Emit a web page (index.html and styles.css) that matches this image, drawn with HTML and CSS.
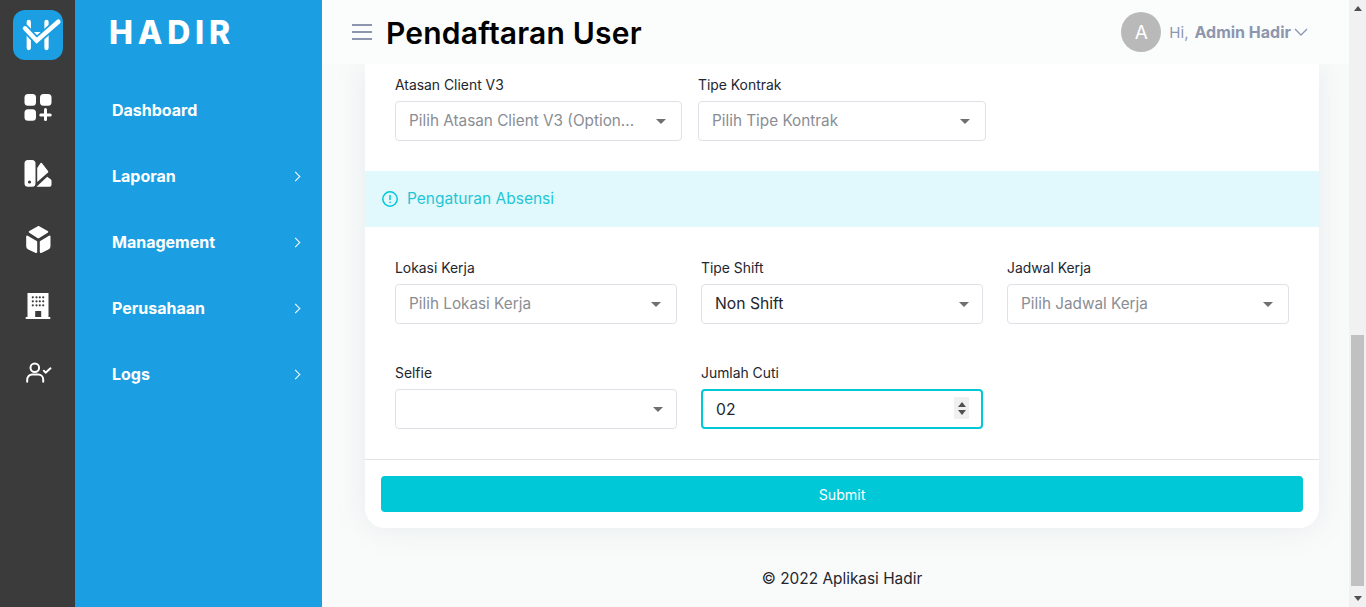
FILE: index.html
```html
<!DOCTYPE html>
<html lang="en">

<head>
    <meta charset="UTF-8">
    <title>Pendaftaran User</title>
    <link rel="stylesheet" href="styles.css">
</head>

<body>
    <div class="app">
        <nav class="rail">
            <div class="logo">
                <svg width="50" height="50" viewBox="0 0 50 50" fill="none" stroke-linecap="round">
                    <path d="M15.800 12v26M33.500 12v26" stroke="#fff" stroke-width="4.300"/>
                    <path d="M20 22h10l-5 5z" fill="#fff"/>
                    <path d="M12 18.300L23.700 30.700 45.300 11.700" stroke="#1b9fe2" stroke-width="8"/>
                    <path d="M12 18.300L23.700 30.700 45.300 11.700" stroke="#fff" stroke-width="4.500"/>
                </svg>
            </div>
            <div class="rail-icon">
                <svg width="28" height="28" viewBox="0 0 28 28" fill="#fff">
                    <rect x="0.500" y="0" width="11.500" height="11.700" rx="3.500"/>
                    <rect x="16" y="0" width="11.500" height="11.700" rx="3.500"/>
                    <rect x="0.500" y="15.300" width="11.500" height="11.500" rx="3.500"/>
                    <path d="M20 15.500a1.500 1.500 0 0 1 3 0v4h3.200a1.500 1.500 0 0 1 0 3H23v3a1.500 1.500 0 0 1-3 0v-3h-3.200a1.500 1.500 0 0 1 0-3H20z"/>
                </svg>
            </div>
            <div class="rail-icon">
                <svg width="28" height="28" viewBox="0 0 28 28" fill="#fff">
                    <path d="M4 0h4a3.500 3.500 0 0 1 3.500 3.500v19.700A3.500 3.500 0 0 1 8 26.700H4a3.500 3.500 0 0 1-3.500-3.500V3.500A3.500 3.500 0 0 1 4 0z"/>
                    <circle cx="5.500" cy="22" r="1.600" fill="#3b3b3b"/>
                    <path d="M13.200 8l3-4.500a1.200 1.200 0 0 1 2 0l5.800 7.500a1.200 1.200 0 0 1 0 1.600L13.200 22z"/>
                    <path d="M12.500 26.700l10.700-10 3.500 2.600a2 2 0 0 1 .8 1.600v3.800a2 2 0 0 1-2 2z"/>
                </svg>
            </div>
            <div class="rail-icon">
                <svg width="28" height="28" viewBox="0 0 28 28" fill="#fff" stroke="#fff" stroke-width="2" stroke-linejoin="round">
                    <path d="M14.300 1l8.900 4.800-8.900 5.500-8.500-5.500z"/>
                    <path d="M3.200 10.500l9 5.300V26l-7.500-3.500a2.500 2.500 0 0 1-1.500-2.300z"/>
                    <path d="M25.500 10.500l-8.700 5.300V26l7.200-3.500a2.500 2.500 0 0 0 1.500-2.300z"/>
                </svg>
            </div>
            <div class="rail-icon">
                <svg width="28" height="28" viewBox="0 0 28 28" fill="#fff">
                    <path d="M3.500 1h21v24h-21z"/>
                    <rect x="1.500" y="25" width="25" height="2" rx="1"/>
                    <g fill="#3b3b3b">
                        <circle cx="8.800" cy="5.300" r="1.100"/>
                        <circle cx="12.500" cy="5.300" r="1.100"/>
                        <circle cx="15.800" cy="5.300" r="1.100"/>
                        <circle cx="19.200" cy="5.300" r="1.100"/>
                        <circle cx="8.800" cy="9.300" r="1.100"/>
                        <circle cx="12.500" cy="9.300" r="1.100"/>
                        <circle cx="15.800" cy="9.300" r="1.100"/>
                        <circle cx="19.200" cy="9.300" r="1.100"/>
                        <circle cx="8.800" cy="13.300" r="1.100"/>
                        <circle cx="12.500" cy="13.300" r="1.100"/>
                        <circle cx="15.800" cy="13.300" r="1.100"/>
                        <circle cx="19.200" cy="13.300" r="1.100"/>
                        <rect x="11.200" y="19" width="6" height="6"/>
                    </g>
                </svg>
            </div>
            <div class="rail-icon">
                <svg width="28" height="28" viewBox="0 0 28 28" fill="none" stroke="#fff" stroke-width="2" stroke-linecap="round" stroke-linejoin="round">
                    <circle cx="10.800" cy="9.700" r="4.300"/>
                    <path d="M3.200 23.700v-2.200a5 5 0 0 1 5-5h6a5 5 0 0 1 5 5v2.200"/>
                    <path d="M19.800 12.700l1.800 2 4.900-4.400"/>
                </svg>
            </div>
        </nav>

        <aside class="sidebar">
            <div class="brand">HADIR</div>
            <ul class="menu">
                <li>Dashboard</li>
                <li>Laporan <span class="chevron"></span></li>
                <li>Management <span class="chevron"></span></li>
                <li>Perusahaan <span class="chevron"></span></li>
                <li>Logs <span class="chevron"></span></li>
            </ul>
        </aside>

        <div class="main">
            <header class="topbar">
                <div class="burger"><span></span><span></span><span></span></div>
                <h1>Pendaftaran User</h1>
                <div class="user">
                    <div class="avatar">A</div>
                    <span class="hi">Hi,</span>
                    <strong>Admin Hadir</strong>
                    <svg width="14" height="8" viewBox="0 0 14 8" fill="none" stroke="#8d96ad" stroke-width="1.300"><path d="M1 1l6 6 6-6"/></svg>
                </div>
            </header>

            <div class="content">
                <div class="card">
                    <div class="row row-two">
                        <div class="field">
                            <label>Atasan Client V3</label>
                            <div class="select placeholder">Pilih Atasan Client V3 (Option...</div>
                        </div>
                        <div class="field">
                            <label>Tipe Kontrak</label>
                            <div class="select placeholder">Pilih Tipe Kontrak</div>
                        </div>
                    </div>

                    <div class="band">
                        <svg width="18" height="18" viewBox="0 0 18 18" fill="none" stroke="#00c8d7" stroke-width="1.500" stroke-linecap="round">
                            <circle cx="9" cy="9" r="7.200"/>
                            <path d="M9 5.500v4M9 12.300v.2"/>
                        </svg>
                        Pengaturan Absensi
                    </div>

                    <div class="row row-three first">
                        <div class="field">
                            <label>Lokasi Kerja</label>
                            <div class="select placeholder">Pilih Lokasi Kerja</div>
                        </div>
                        <div class="field">
                            <label>Tipe Shift</label>
                            <div class="select native">Non Shift</div>
                        </div>
                        <div class="field">
                            <label>Jadwal Kerja</label>
                            <div class="select placeholder">Pilih Jadwal Kerja</div>
                        </div>
                    </div>

                    <div class="row row-three second">
                        <div class="field">
                            <label>Selfie</label>
                            <div class="select native"></div>
                        </div>
                        <div class="field">
                            <label>Jumlah Cuti</label>
                            <div class="number-wrap">
                                <input class="number" type="number" value="02">
                                <span class="spin"><i class="spin-up"></i><i class="spin-down"></i></span>
                            </div>
                        </div>
                    </div>

                    <div class="card-footer">
                        <button class="submit" type="button">Submit</button>
                    </div>
                </div>
                <footer class="copyright">© 2022 Aplikasi Hadir</footer>
            </div>
        </div>

        <div class="scrollbar">
            <span class="arrow up"></span>
            <div class="track"><div class="thumb"></div></div>
            <span class="arrow down"></span>
        </div>
    </div>
</body>

</html>
```

FILE: styles.css
```css
* {
    margin: 0;
    padding: 0;
    box-sizing: border-box;
    font-family: "Inter", "Noto Sans", sans-serif;
}

html,
body {
    height: 100%;
    overflow: hidden;
    background-color: #f9fbfa;
}

.app {
    display: flex;
    height: 607px;
}

.rail {
    display: flex;
    flex-direction: column;
    align-items: center;
    width: 75px;
    flex-shrink: 0;
    padding-top: 10px;
    background-color: #3b3b3b;
}

.logo {
    display: flex;
    justify-content: center;
    align-items: center;
    width: 50px;
    height: 50px;
    margin-bottom: 15px;
    border-radius: 12px;
    background-color: #1b9fe2;
}

.rail-icon {
    display: flex;
    justify-content: center;
    align-items: center;
    height: 66px;
    width: 100%;
}

.sidebar {
    width: 247px;
    flex-shrink: 0;
    background-color: #1b9fe2;
    color: #fff;
}

.brand {
    height: 66px;
    padding: 13px 0 0 34px;
    font-size: 32px;
    line-height: 40px;
    font-weight: 800;
    letter-spacing: 4.800px;
}

.menu {
    list-style: none;
    margin-top: 11px;
}

.menu li {
    display: flex;
    justify-content: space-between;
    align-items: center;
    height: 66px;
    padding: 0 21px 0 37px;
    font-size: 16px;
    font-weight: 700;
}

.chevron {
    width: 7px;
    height: 7px;
    margin-right: 2px;
    border-top: 1.500px solid #fff;
    border-right: 1.500px solid #fff;
    transform: rotate(45deg);
}

.main {
    display: flex;
    flex-direction: column;
    flex: 1;
    min-width: 0;
}

.topbar {
    position: relative;
    z-index: 1;
    display: flex;
    align-items: center;
    height: 64px;
    flex-shrink: 0;
    padding: 0 41px 0 30px;
    background-color: #fbfcfc;
}

.burger {
    display: flex;
    flex-direction: column;
    gap: 5px;
    width: 20px;
    margin-right: 14px;
}

.burger span {
    height: 2px;
    background-color: #8d96ad;
}

.topbar h1 {
    padding-top: 2px;
    font-size: 30px;
    font-weight: 600;
    letter-spacing: 0.200px;
    color: #000;
}

.user {
    display: flex;
    align-items: center;
    margin-left: auto;
    font-size: 15px;
    color: #8d96ad;
}

.avatar {
    display: flex;
    justify-content: center;
    align-items: center;
    width: 40px;
    height: 40px;
    margin-right: 8px;
    border-radius: 50%;
    background-color: #b9b9b9;
    color: #fff;
    font-size: 19px;
}

.user strong {
    margin: 0 3px 0 6px;
    font-size: 16px;
    font-weight: 700;
}

.content {
    flex: 1;
    min-height: 0;
    padding: 0 30px 0 43px;
}

.card {
    height: 464px;
    border-radius: 0 0 20px 20px;
    background-color: #fff;
    box-shadow: 0 0 30px rgba(130, 140, 165, 0.15);
}

.row {
    display: grid;
}

.row-two {
    grid-template-columns: 287px 288px;
    column-gap: 16px;
    height: 107px;
    padding: 13px 30px 0;
}

.row-three {
    grid-template-columns: repeat(3, 282px);
    column-gap: 24px;
    padding: 0 30px;
}

.row-three.first {
    padding-top: 33px;
}

.row-three.second {
    padding-top: 41px;
}

.field label {
    display: block;
    height: 16px;
    margin-bottom: 8px;
    font-size: 13.900px;
    line-height: 16px;
    color: #23262f;
}

.select {
    position: relative;
    height: 40px;
    padding-left: 13px;
    border: 1px solid #dfe1e7;
    border-radius: 4px;
    font-size: 15.700px;
    line-height: 38px;
    color: #23262f;
}

.select.placeholder {
    font-size: 15.300px;
    color: #8a8d93;
}

.select::after {
    content: "";
    position: absolute;
    right: 15px;
    top: 17px;
    border-left: 5px solid transparent;
    border-right: 5px solid transparent;
    border-top: 5px solid #6f6f6f;
}

.select.native::after {
    right: 13px;
}

.band {
    display: flex;
    align-items: center;
    gap: 8px;
    height: 56px;
    padding-left: 16px;
    padding-bottom: 1px;
    background-color: #e1f9fc;
    color: #1fc6d6;
    font-size: 15.500px;
}

.number-wrap {
    position: relative;
}

.number {
    display: block;
    width: 100%;
    height: 40px;
    padding: 0 13px;
    border: 2px solid #00c8d7;
    border-radius: 4px;
    outline: none;
    font-size: 15.700px;
    color: #23262f;
}

.number::-webkit-inner-spin-button {
    -webkit-appearance: none;
    margin: 0;
}

.spin {
    position: absolute;
    right: 14px;
    top: 8px;
    display: flex;
    flex-direction: column;
    justify-content: center;
    align-items: center;
    gap: 3px;
    width: 15px;
    height: 22px;
    background-color: #f0f0f0;
}

.spin i {
    border-left: 4px solid transparent;
    border-right: 4px solid transparent;
}

.spin-up {
    border-bottom: 5px solid #505050;
}

.spin-down {
    border-top: 5px solid #505050;
}

.card-footer {
    margin-top: 30px;
    padding: 16px 16px 0;
    border-top: 1px solid #e3e3e3;
}

.submit {
    display: block;
    width: 100%;
    height: 36px;
    border: none;
    border-radius: 4px;
    background-color: #00c8d7;
    color: #fff;
    font-size: 14.200px;
    cursor: pointer;
}

.copyright {
    margin-top: 42px;
    text-align: center;
    font-size: 15.400px;
    line-height: 18px;
    color: #23262f;
}

.scrollbar {
    display: flex;
    flex-direction: column;
    align-items: center;
    width: 17px;
    flex-shrink: 0;
    background-color: #f1f1f1;
}

.arrow {
    flex-shrink: 0;
    margin: 6px 0;
    border-left: 4px solid transparent;
    border-right: 4px solid transparent;
}

.arrow.up {
    border-bottom: 5px solid #505050;
}

.arrow.down {
    border-top: 5px solid #505050;
}

.track {
    display: flex;
    flex-direction: column;
    justify-content: flex-end;
    flex: 1;
    width: 100%;
}

.thumb {
    height: 251px;
    margin: 0 2px 4px;
    background-color: #c1c1c1;
}
```
